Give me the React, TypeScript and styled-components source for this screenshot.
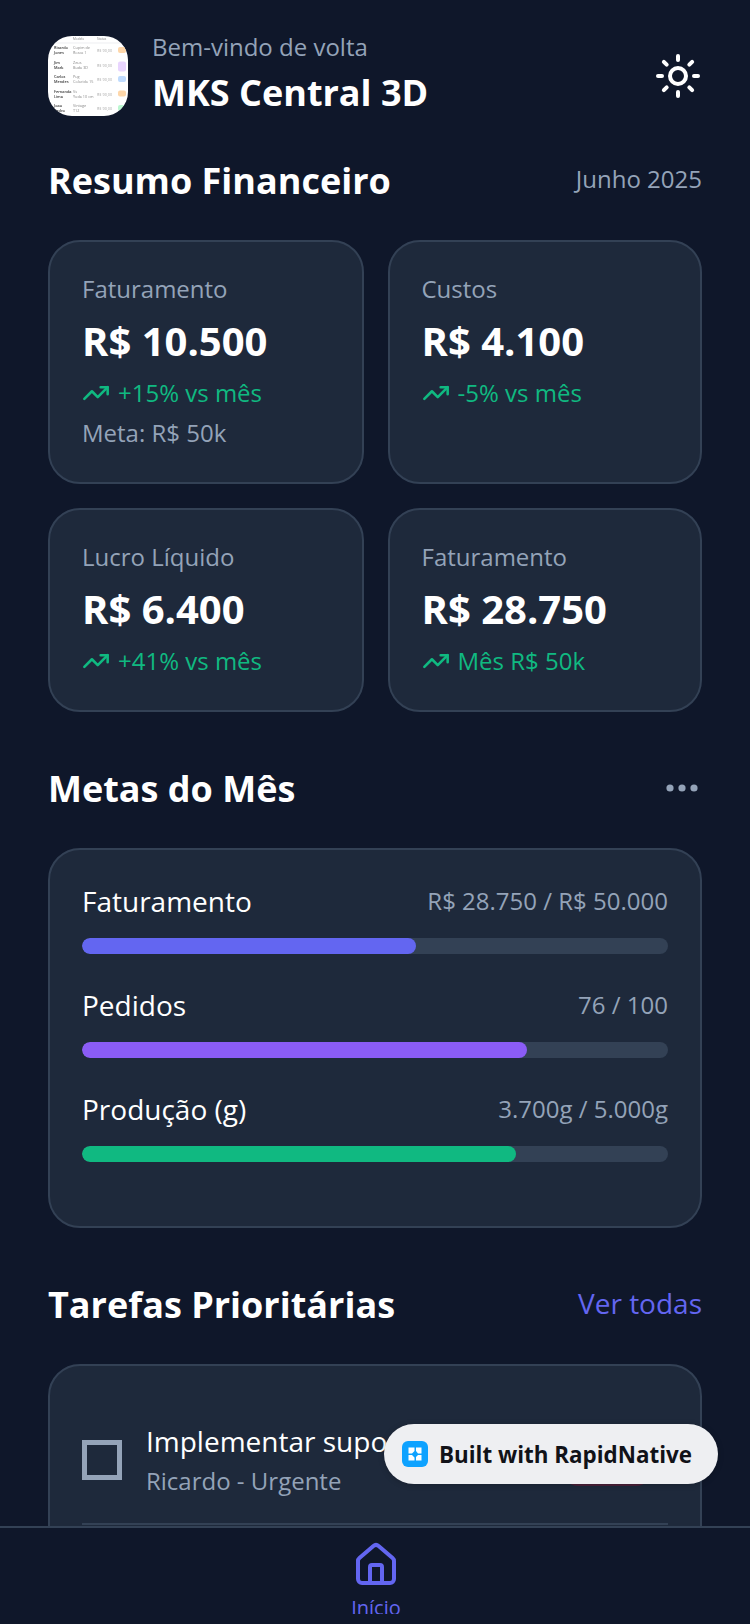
import React from "react";
import styled, { createGlobalStyle } from "styled-components";
import { Sun, TrendingUp, House } from "lucide-react";

const Global = createGlobalStyle`
  html, body { margin: 0; padding: 0; background: #0f172a; }
  * { box-sizing: border-box; }
`;

const Screen = styled.div`
  position: relative;
  width: 750px;
  height: 1624px;
  display: flex;
  flex-direction: column;
  overflow: hidden;
  background: #0f172a;
  font-family: "Open Sans", "Noto Sans", sans-serif;
  color: #fff;
`;

const Scroll = styled.main`
  flex: 1;
  min-height: 0;
  overflow: hidden;
  padding: 36px 48px 0;
`;

const Header = styled.header`
  display: flex;
  align-items: center;
  height: 80px;
`;

const Thumb = styled.svg`
  width: 80px;
  height: 80px;
  border-radius: 24px;
  flex: none;
  background: #fff;
  filter: blur(0.25px);
`;

const HeaderText = styled.div`
  flex: 1;
  align-self: flex-start;
  margin: -5px 0 0 24px;
  display: flex;
  flex-direction: column;
  gap: 6px;
`;

const Greeting = styled.div`
  font-size: 24px;
  line-height: 32px;
  color: #94a3b8;
`;

const AppName = styled.div`
  font-size: 36px;
  line-height: 48px;
  font-weight: 700;
`;

const ThemeButton = styled.div`
  width: 48px;
  height: 48px;
  color: #fff;
  display: flex;
`;

const SectionHead = styled.div<{ $top: number }>`
  display: flex;
  align-items: center;
  justify-content: space-between;
  margin-top: ${(p) => p.$top}px;
  height: 48px;
`;

const SectionTitle = styled.h2`
  margin: 0;
  font-size: 36px;
  line-height: 48px;
  font-weight: 700;
`;

const Period = styled.span`
  font-size: 24px;
  line-height: 32px;
  color: #94a3b8;
  margin-bottom: 4px;
`;

const SeeAll = styled.span`
  font-size: 28px;
  line-height: 40px;
  color: #6366f1;
  margin-bottom: 4px;
`;

const Grid = styled.div`
  display: grid;
  grid-template-columns: 315.5px 314.5px;
  grid-template-rows: 244px 204px;
  gap: 24px;
  margin-top: 35px;
`;

const Card = styled.section`
  background: #1e293b;
  border: 2px solid #334155;
  border-radius: 32px;
`;

const StatCard = styled(Card)`
  padding: 31px 32px;
`;

const StatLabel = styled.div`
  font-size: 24px;
  line-height: 32px;
  color: #94a3b8;
`;

const StatValue = styled.div`
  font-size: 40px;
  line-height: 56px;
  font-weight: 700;
  margin-top: 8px;
`;

const Trend = styled.div`
  display: flex;
  align-items: center;
  gap: 8px;
  margin-top: 8px;
  font-size: 24px;
  line-height: 32px;
  color: #10b981;
`;

const StatNote = styled.div`
  margin-top: 8px;
  font-size: 24px;
  line-height: 32px;
  color: #94a3b8;
`;

const GoalsCard = styled(Card)`
  margin-top: 35px;
  padding: 31px 32px 33px;
`;

const Goal = styled.div`
  margin-bottom: 31px;
`;

const GoalHead = styled.div`
  display: flex;
  align-items: center;
  justify-content: space-between;
  height: 40px;
  margin-bottom: 17px;
`;

const GoalName = styled.span`
  font-size: 28px;
  line-height: 40px;
`;

const GoalValue = styled.span`
  font-size: 24px;
  line-height: 32px;
  color: #94a3b8;
`;

const Track = styled.div`
  height: 16px;
  border-radius: 8px;
  background: #334155;
  overflow: hidden;
`;

const Fill = styled.div<{ $color: string }>`
  height: 100%;
  border-radius: 8px;
  background: ${(p) => p.$color};
`;

const MoreDots = styled.svg`
  width: 32px;
  height: 10px;
  margin-right: 4px;
  margin-bottom: 2px;
  fill: #94a3b8;
`;

const TasksCard = styled(Card)`
  margin-top: 35px;
  padding: 32px 32px 0;
  min-height: 300px;
`;

const Task = styled.div`
  display: flex;
  align-items: center;
  gap: 24px;
  padding: 25px 0 26px;
  border-bottom: 2px solid #334155;
`;

const Check = styled.div`
  width: 40px;
  height: 40px;
  flex: none;
  border: 5px solid #94a3b8;
`;

const TaskBody = styled.div`
  flex: 1;
  min-width: 0;
  margin-top: -2px;
`;

const TaskTitle = styled.div`
  font-size: 28px;
  line-height: 40px;
  white-space: nowrap;
`;

const TaskMeta = styled.div`
  font-size: 24px;
  line-height: 32px;
  margin-top: 4px;
  color: #94a3b8;
`;

const Priority = styled.div`
  width: 90px;
  height: 52px;
  margin-right: 16px;
  border-radius: 16px;
  background: #4a2038;
  flex: none;
`;

const Nav = styled.nav`
  flex: none;
  height: 98px;
  border-top: 2px solid #334155;
  background: #0f172a;
  display: flex;
  justify-content: center;
  padding: 13px 0 0 2px;
`;

const NavItem = styled.div`
  display: flex;
  flex-direction: column;
  align-items: center;
  height: 73px;
  overflow: hidden;
  color: #6366f1;
`;

const NavIcon = styled(House)`
  flex: none;
`;

const NavLabel = styled.span`
  font-size: 20px;
  line-height: 28px;
  margin-top: 5px;
  flex: none;
`;

const Badge = styled.div`
  position: absolute;
  left: 384px;
  top: 1424px;
  width: 334px;
  height: 60px;
  border-radius: 30px;
  background: #eeeff2;
  display: flex;
  align-items: center;
  padding-left: 18px;
  gap: 11px;
  box-shadow: 0 1px 6px rgba(0, 0, 0, 0.2);
  color: #111218;
  font-size: 22.4px;
  font-weight: 700;
  white-space: nowrap;
`;

const BadgeLogo = styled.svg`
  width: 26px;
  height: 26px;
  flex: none;
`;

const Thumbnail = () => {
  const rows = [
    ["Ricardo", "Jones", "Cupim de", "Rosca 1", "#fed7aa"],
    ["Jim", "Mark", "Zeus", "Buda 3D", "#e9d5ff"],
    ["Carlos", "Mendes", "Pug", "Colorido 15", "#bfdbfe"],
    ["Fernanda", "Lima", "Vs", "Yoda 10 cm", "#fed7aa"],
    ["Joao", "Pedro", "Vintage", "T12", "#bbf7d0"],
  ];
  return (
    <Thumb viewBox="0 0 80 80" fontFamily="Open Sans, sans-serif" fontSize="3.8" fill="#555">
      <line x1="0" y1="7" x2="80" y2="7" stroke="#e5e7eb" strokeWidth="0.7" />
      <text x="25" y="3.5" fill="#888" fontSize="3.2">Modelo</text>
      <text x="49" y="3.5" fill="#888" fontSize="3.2">Status</text>
      {rows.map((r, i) => {
        const y = 13 + i * 14.5;
        return (
          <g key={r[0]}>
            <text x="6" y={y} fontWeight="600" fill="#333">{r[0]}</text>
            <text x="6" y={y + 5} fontWeight="600" fill="#333">{r[1]}</text>
            <text x="25" y={y} fill="#888">{r[2]}</text>
            <text x="25" y={y + 5} fill="#888">{r[3]}</text>
            <text x="49" y={y + 3} fill="#aaa">R$ 90,00</text>
            <rect x="70" y={y - 2} width="8" height={i === 1 ? 10 : 6} rx="2" fill={r[4]} />
          </g>
        );
      })}
    </Thumb>
  );
};

const stats = [
  { label: "Faturamento", value: "R$ 10.500", trend: "+15% vs mês", note: "Meta: R$ 50k" },
  { label: "Custos", value: "R$ 4.100", trend: "-5% vs mês" },
  { label: "Lucro Líquido", value: "R$ 6.400", trend: "+41% vs mês" },
  { label: "Faturamento", value: "R$ 28.750", trend: "Mês R$ 50k" },
];

const goals = [
  { name: "Faturamento", value: "R$ 28.750 / R$ 50.000", pct: 57, color: "#6366f1" },
  { name: "Pedidos", value: "76 / 100", pct: 76, color: "#8b5cf6" },
  { name: "Produção (g)", value: "3.700g / 5.000g", pct: 74, color: "#10b981" },
];

export default function App() {
  return (
    <Screen>
      <Global />
      <Scroll>
        <Header>
          <Thumbnail />
          <HeaderText>
            <Greeting>Bem-vindo de volta</Greeting>
            <AppName>MKS Central 3D</AppName>
          </HeaderText>
          <ThemeButton>
            <Sun size={48} strokeWidth={2} />
          </ThemeButton>
        </Header>

        <SectionHead $top={41}>
          <SectionTitle>Resumo Financeiro</SectionTitle>
          <Period>Junho 2025</Period>
        </SectionHead>

        <Grid>
          {stats.map((s, i) => (
            <StatCard key={i}>
              <StatLabel>{s.label}</StatLabel>
              <StatValue>{s.value}</StatValue>
              <Trend>
                <TrendingUp size={28} strokeWidth={2.2} />
                {s.trend}
              </Trend>
              {s.note && <StatNote>{s.note}</StatNote>}
            </StatCard>
          ))}
        </Grid>

        <SectionHead $top={53}>
          <SectionTitle>Metas do Mês</SectionTitle>
          <MoreDots viewBox="0 0 32 10">
            <circle cx="4" cy="5" r="3.6" />
            <circle cx="16" cy="5" r="3.6" />
            <circle cx="28" cy="5" r="3.6" />
          </MoreDots>
        </SectionHead>

        <GoalsCard>
          {goals.map((g) => (
            <Goal key={g.name}>
              <GoalHead>
                <GoalName>{g.name}</GoalName>
                <GoalValue>{g.value}</GoalValue>
              </GoalHead>
              <Track>
                <Fill $color={g.color} style={{ width: `${g.pct}%` }} />
              </Track>
            </Goal>
          ))}
        </GoalsCard>

        <SectionHead $top={53}>
          <SectionTitle>Tarefas Prioritárias</SectionTitle>
          <SeeAll>Ver todas</SeeAll>
        </SectionHead>

        <TasksCard>
          <Task>
            <Check />
            <TaskBody>
              <TaskTitle>Implementar suporte</TaskTitle>
              <TaskMeta>Ricardo - Urgente</TaskMeta>
            </TaskBody>
            <Priority />
          </Task>
        </TasksCard>
      </Scroll>

      <Nav>
        <NavItem>
          <NavIcon size={48} strokeWidth={2} />
          <NavLabel>Início</NavLabel>
        </NavItem>
      </Nav>

      <Badge>
        <BadgeLogo viewBox="0 0 26 26">
          <rect width="26" height="26" rx="6" fill="#0ea2ff" />
          <path d="M6.5 6.5h6v3.5L10 12.5H6.5zM14 6.5h5.5v6H16L14 10zM6.5 14H10l2.5 2.5v3h-6zM19.5 19.5H14V16l2-2h3.5z" fill="#fff" />
        </BadgeLogo>
        Built with RapidNative
      </Badge>
    </Screen>
  );
}
